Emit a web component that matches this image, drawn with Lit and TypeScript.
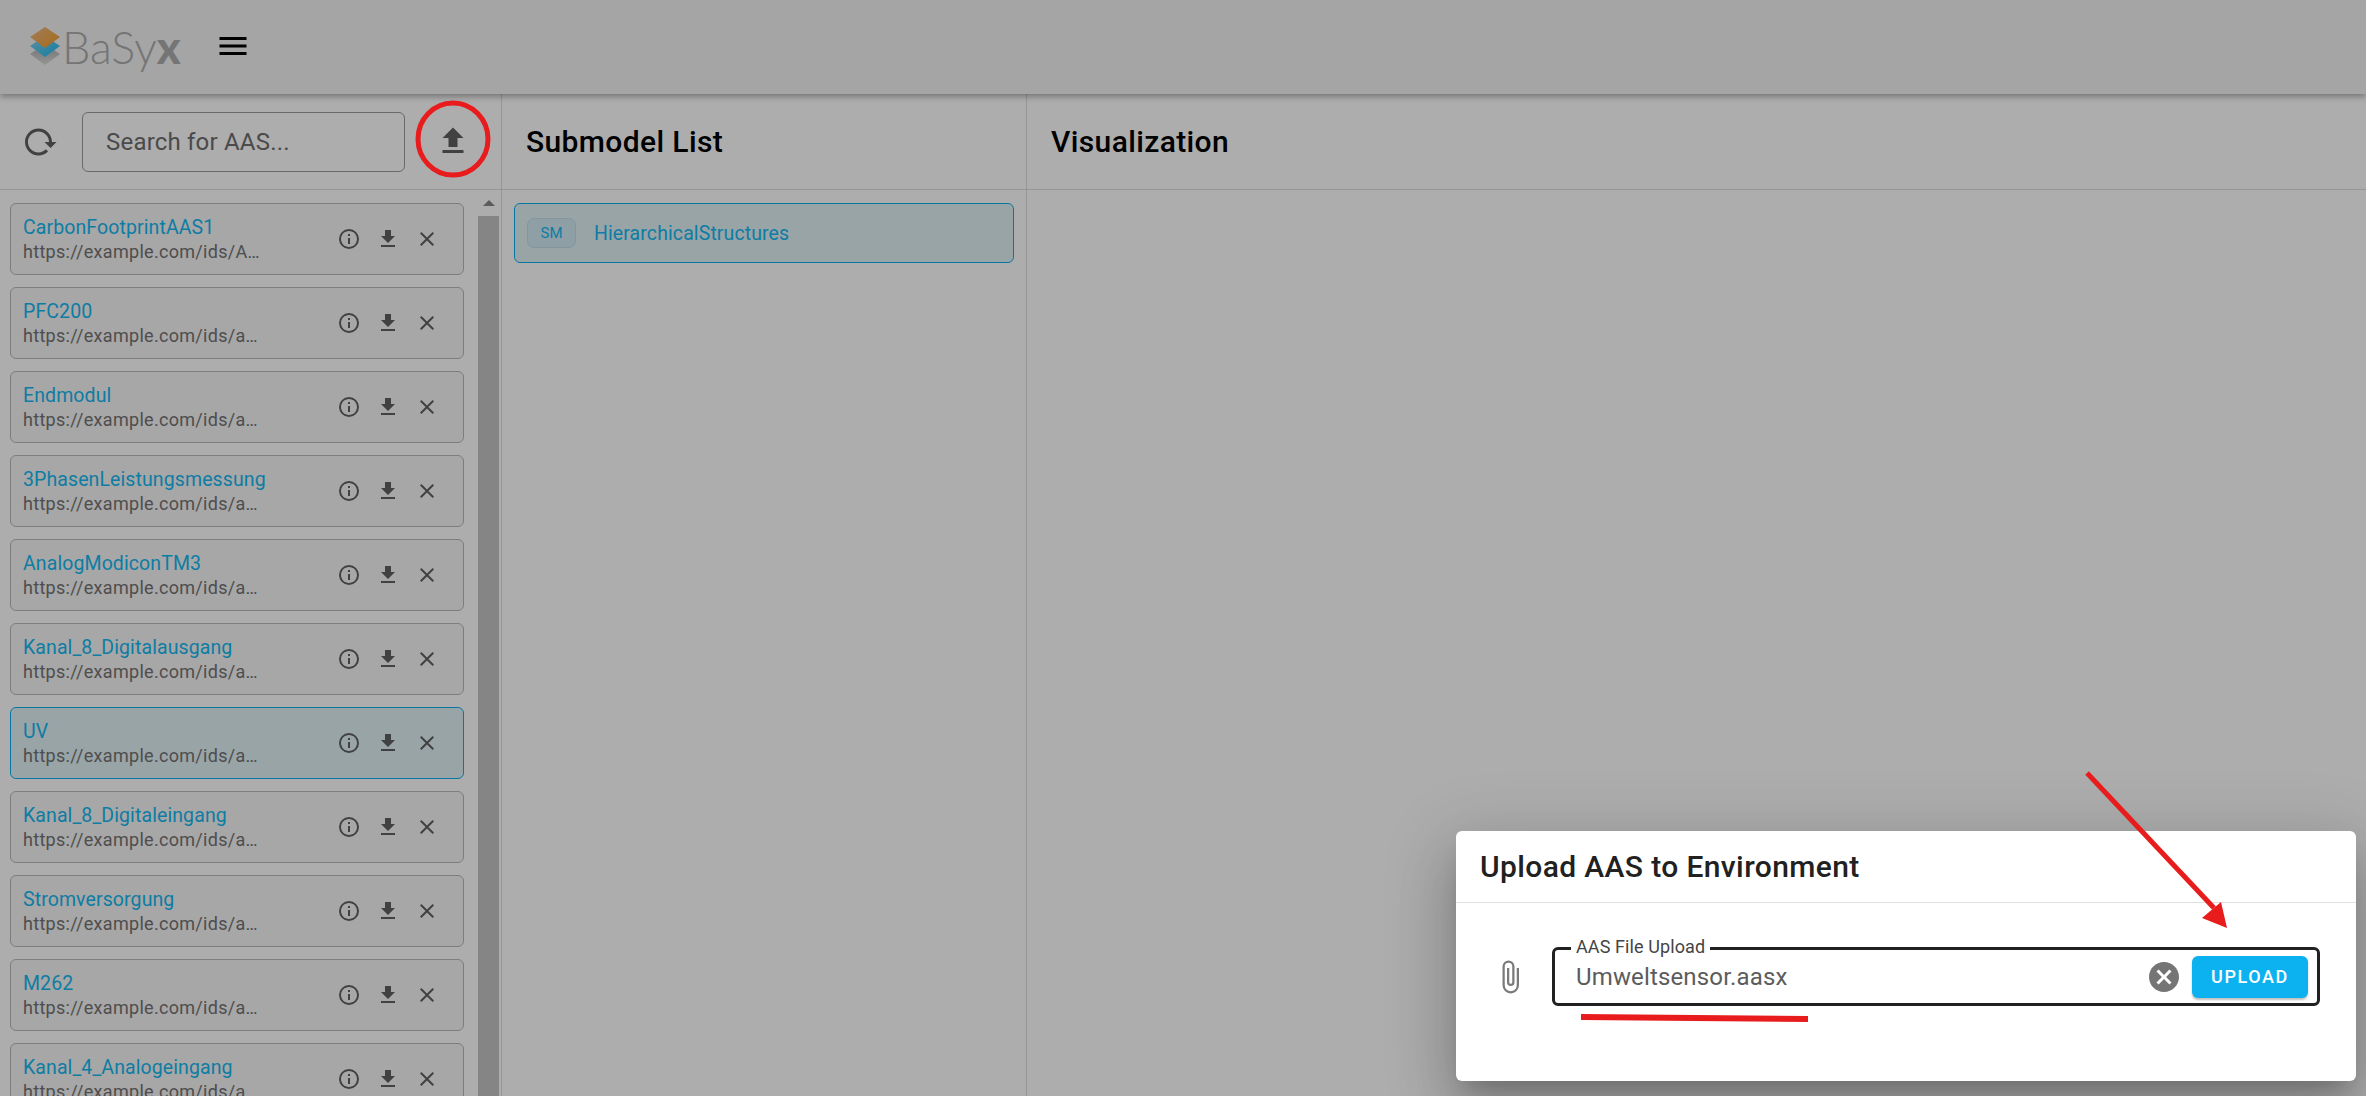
import { LitElement, html, css, svg } from 'lit'
import { customElement } from 'lit/decorators.js'

const mdi = {
  menu: 'M3,6H21V8H3V6M3,11H21V13H3V11M3,16H21V18H3V16Z',
  reload: 'M2 12C2 16.97 6.03 21 11 21C13.39 21 15.68 20.06 17.4 18.4L15.9 16.9C14.63 18.25 12.86 19 11 19C4.76 19 1.64 11.46 6.05 7.05C10.46 2.64 18 5.77 18 12H15L19 16H19.1L23 12H20C20 7.03 15.97 3 11 3C6.03 3 2 7.03 2 12Z',
  upload: 'M9,16V10H5L12,3L19,10H15V16H9M5,20V18H19V20H5Z',
  download: 'M5,20H19V18H5M19,9H15V3H9V9H5L12,16L19,9Z',
  close: 'M19,6.41L17.59,5L12,10.59L6.41,5L5,6.41L10.59,12L5,17.59L6.41,19L12,13.41L17.59,19L19,17.59L13.41,12L19,6.41Z',
  info: 'M11,9H13V7H11M12,20C7.59,20 4,16.41 4,12C4,7.59 7.59,4 12,4C16.41,4 20,7.59 20,12C20,16.41 16.41,20 12,20M12,2A10,10 0 0,0 2,12A10,10 0 0,0 12,22A10,10 0 0,0 22,12A10,10 0 0,0 12,2M11,17H13V11H11V17Z',
  clip: 'M16.5,6V17.5A4,4 0 0,1 12.5,21.5A4,4 0 0,1 8.5,17.5V5A2.5,2.5 0 0,1 11,2.5A2.5,2.5 0 0,1 13.5,5V15.5A1,1 0 0,1 12.5,16.5A1,1 0 0,1 11.5,15.5V6H10V15.5A2.5,2.5 0 0,0 12.5,18A2.5,2.5 0 0,0 15,15.5V5A4,4 0 0,0 11,1A4,4 0 0,0 7,5V17.5A5.5,5.5 0 0,0 12.5,23A5.5,5.5 0 0,0 18,17.5V6H16.5Z',
  clear: 'M12,2C17.53,2 22,6.47 22,12C22,17.53 17.53,22 12,22C6.47,22 2,17.53 2,12C2,6.47 6.47,2 12,2M15.59,7L12,10.59L8.41,7L7,8.41L10.59,12L7,15.59L8.41,17L12,13.41L15.59,17L17,15.59L13.41,12L17,8.41L15.59,7Z',
}

const icon = (d: string, size: number) => html`<svg class="icon" width=${size} height=${size} viewBox="0 0 24 24"><path d=${d} fill="currentColor"></path></svg>`

const aasList = [
  { name: 'CarbonFootprintAAS1', id: 'https://example.com/ids/A…' },
  { name: 'PFC200', id: 'https://example.com/ids/a…' },
  { name: 'Endmodul', id: 'https://example.com/ids/a…' },
  { name: '3PhasenLeistungsmessung', id: 'https://example.com/ids/a…' },
  { name: 'AnalogModiconTM3', id: 'https://example.com/ids/a…' },
  { name: 'Kanal_8_Digitalausgang', id: 'https://example.com/ids/a…' },
  { name: 'UV', id: 'https://example.com/ids/a…', selected: true },
  { name: 'Kanal_8_Digitaleingang', id: 'https://example.com/ids/a…' },
  { name: 'Stromversorgung', id: 'https://example.com/ids/a…' },
  { name: 'M262', id: 'https://example.com/ids/a…' },
  { name: 'Kanal_4_Analogeingang', id: 'https://example.com/ids/a…' },
]

@customElement('app-root')
export class AppRoot extends LitElement {
  static styles = css`
    :host {
      display: block;
      position: relative;
      height: 1096px;
      overflow: hidden;
      background: #fff;
      font-family: Roboto, sans-serif;
      color: #000;
    }

    .icon {
      display: block;
      flex: none;
    }

    /* header */
    .header {
      position: relative;
      z-index: 1;
      height: 94px;
      display: flex;
      align-items: center;
      background: #f3f3f3;
      box-shadow: 0 3px 6px rgba(0, 0, 0, 0.3);
    }

    .logo {
      display: flex;
      align-items: center;
      margin-left: 30px;
      margin-top: -3px;
      width: 185px;
    }

    .logo-text {
      font-family: Lato, sans-serif;
      font-weight: 300;
      font-size: 45px;
      line-height: 1;
      color: #adadad;
      margin-left: 2px;
      margin-top: 3px;
    }

    .logo-text b {
      font-weight: 900;
      color: #adadad;
    }

    .menu {
      color: #000;
      margin-top: -2px;
    }

    /* columns */
    .columns {
      display: flex;
      height: 1002px;
    }

    .col-aas {
      width: 501px;
      flex: none;
      border-right: 1px solid #ddd;
      display: flex;
      flex-direction: column;
    }

    .col-sm {
      width: 524px;
      flex: none;
      border-right: 1px solid #ddd;
      display: flex;
      flex-direction: column;
    }

    .col-vis {
      flex: 1;
    }

    .toolbar {
      height: 96px;
      flex: none;
      box-sizing: border-box;
      border-bottom: 1px solid #ddd;
      display: flex;
      align-items: center;
    }

    .toolbar h2 {
      margin: 0 0 0 24px;
      font-size: 30px;
      font-weight: 500;
      letter-spacing: 0.375px;
    }

    .col-aas .toolbar {
      padding-left: 22px;
    }

    .reload {
      color: #616161;
    }

    .search {
      width: 323px;
      height: 60px;
      box-sizing: border-box;
      margin-left: 24px;
      margin-top: 1px;
      padding-left: 23px;
      display: flex;
      align-items: center;
      border: 1.5px solid #9c9c9c;
      border-radius: 6px;
      font-size: 24px;
      letter-spacing: 0.2px;
      color: #6e6e6e;
    }

    .upload-btn {
      margin-left: 30px;
      margin-top: -2px;
      color: #616161;
    }

    .list-wrap {
      flex: 1;
      display: flex;
      min-height: 0;
    }

    .list {
      flex: 1;
      padding: 13px 0 0 10px;
      display: flex;
      flex-direction: column;
      gap: 12px;
      overflow: hidden;
    }

    .card {
      width: 454px;
      height: 72px;
      flex: none;
      box-sizing: border-box;
      border: 1.5px solid #b8b8b8;
      border-radius: 6px;
      background: #f6f6f6;
      display: flex;
      align-items: center;
      padding-left: 12px;
    }

    .card.selected {
      border-color: #0cb2f0;
      background: #e2f2f7;
    }

    .card-text {
      width: 314px;
      flex: none;
    }

    .card-name {
      font-size: 19.5px;
      line-height: 24px;
      letter-spacing: 0.1px;
      color: #14b8f2;
    }

    .card-id {
      font-size: 18px;
      line-height: 23px;
      letter-spacing: 0.3px;
      color: #737373;
    }

    .card-actions {
      display: flex;
      gap: 15px;
      color: #616161;
    }

    .scrollbar {
      width: 21px;
      flex: none;
      margin-right: 2px;
      display: flex;
      flex-direction: column;
      align-items: center;
    }

    .scroll-arrow {
      width: 0;
      height: 0;
      margin-top: 10px;
      border-left: 6px solid transparent;
      border-right: 6px solid transparent;
      border-bottom: 6px solid #888;
    }

    .scroll-thumb {
      width: 100%;
      flex: 1;
      margin-top: 10px;
      background: #c4c4c4;
    }

    .sm-list {
      padding: 13px 0 0 12px;
    }

    .sm-card {
      width: 500px;
      height: 60px;
      box-sizing: border-box;
      border: 1.5px solid #0cb2f0;
      border-radius: 6px;
      background: #e2f2f7;
      display: flex;
      align-items: center;
      padding-left: 12px;
    }

    .chip {
      width: 49px;
      height: 30px;
      box-sizing: border-box;
      border: 1px solid #c6dce6;
      border-radius: 7px;
      background: #d2eaf5;
      display: flex;
      align-items: center;
      justify-content: center;
      font-size: 15px;
      color: #14b8f2;
    }

    .sm-name {
      margin-left: 18px;
      font-size: 19.5px;
      letter-spacing: 0.1px;
      color: #14b8f2;
    }

    /* overlay */
    .scrim {
      position: absolute;
      inset: 0;
      z-index: 2;
      background: rgba(0, 0, 0, 0.32);
    }

    .dialog {
      position: absolute;
      z-index: 3;
      left: 1456px;
      top: 831px;
      width: 900px;
      height: 250px;
      background: #fff;
      border-radius: 6px;
      box-shadow: 0 16px 22px -10px rgba(0, 0, 0, 0.2), 0 36px 57px 5px rgba(0, 0, 0, 0.14), 0 14px 69px 12px rgba(0, 0, 0, 0.12);
    }

    .dialog-title {
      height: 72px;
      box-sizing: border-box;
      border-bottom: 1px solid #e0e0e0;
      padding-left: 24px;
      display: flex;
      align-items: center;
      font-size: 30px;
      font-weight: 500;
      letter-spacing: 0.375px;
      color: #212121;
    }

    .dialog-body {
      display: flex;
      align-items: center;
      padding-top: 44px;
    }

    .clip {
      margin-left: 36px;
      color: #7a7a7a;
    }

    .field {
      position: relative;
      width: 768px;
      height: 59px;
      margin-left: 24px;
      box-sizing: border-box;
      border: 3px solid #212121;
      border-radius: 6px;
      display: flex;
      align-items: center;
      padding-left: 21px;
    }

    .field-label {
      position: absolute;
      left: 16px;
      top: -13px;
      padding: 0 5px;
      background: #fff;
      font-size: 18px;
      line-height: 20px;
      letter-spacing: 0.1px;
      color: #444;
    }

    .field-value {
      flex: 1;
      font-size: 24px;
      letter-spacing: 0.15px;
      color: #5c5c5c;
    }

    .clear {
      color: #757575;
      margin-right: 2px;
    }

    .btn {
      width: 116px;
      height: 42px;
      margin-left: 8px;
      margin-right: 9px;
      border-radius: 6px;
      background: #0cb2f0;
      box-shadow: 0 2px 2px rgba(0, 0, 0, 0.25);
      display: flex;
      align-items: center;
      justify-content: center;
      font-size: 18px;
      font-weight: 500;
      letter-spacing: 1.6px;
      color: #fff;
    }

    /* hand drawn marks from the screenshot */
    .marks {
      position: absolute;
      inset: 0;
      z-index: 4;
      pointer-events: none;
    }
  `

  private renderCard(item: { name: string; id: string; selected?: boolean }) {
    return html`
      <div class="card ${item.selected ? 'selected' : ''}">
        <div class="card-text">
          <div class="card-name">${item.name}</div>
          <div class="card-id">${item.id}</div>
        </div>
        <div class="card-actions">
          ${icon(mdi.info, 24)} ${icon(mdi.download, 24)} ${icon(mdi.close, 24)}
        </div>
      </div>
    `
  }

  render() {
    return html`
      <div class="header">
        <div class="logo">
          <svg width="30" height="38" viewBox="0 0 30 38">
            <defs>
              <linearGradient id="orange" x1="0" y1="0" x2="1" y2="1">
                <stop offset="0" stop-color="#e8b88a"></stop>
                <stop offset="1" stop-color="#fa9f20"></stop>
              </linearGradient>
              <linearGradient id="blue" x1="0" y1="0" x2="1" y2="1">
                <stop offset="0" stop-color="#8fd0e8"></stop>
                <stop offset="1" stop-color="#16bdf5"></stop>
              </linearGradient>
              <linearGradient id="grey" x1="0" y1="0" x2="0" y2="1">
                <stop offset="0" stop-color="#a8a8a8"></stop>
                <stop offset="1" stop-color="#dcdcdc"></stop>
              </linearGradient>
            </defs>
            ${svg`
              <path d="M15 17 L30 27 L15 38 L0 27 Z" fill="url(#grey)"></path>
              <path d="M15 9 L30 19 L15 30 L0 19 Z" fill="url(#blue)"></path>
              <path d="M15 0 L30 10 L15 21 L0 10 Z" fill="url(#orange)"></path>
            `}
          </svg>
          <div class="logo-text">BaSy<b>x</b></div>
        </div>
        <div class="menu">${icon(mdi.menu, 36)}</div>
      </div>

      <div class="columns">
        <div class="col-aas">
          <div class="toolbar">
            <div class="reload">${icon(mdi.reload, 36)}</div>
            <div class="search">Search for AAS...</div>
            <div class="upload-btn">${icon(mdi.upload, 36)}</div>
          </div>
          <div class="list-wrap">
            <div class="list">${aasList.map((item) => this.renderCard(item))}</div>
            <div class="scrollbar">
              <div class="scroll-arrow"></div>
              <div class="scroll-thumb"></div>
            </div>
          </div>
        </div>

        <div class="col-sm">
          <div class="toolbar"><h2>Submodel List</h2></div>
          <div class="sm-list">
            <div class="sm-card">
              <div class="chip">SM</div>
              <div class="sm-name">HierarchicalStructures</div>
            </div>
          </div>
        </div>

        <div class="col-vis">
          <div class="toolbar"><h2>Visualization</h2></div>
        </div>
      </div>

      <div class="scrim"></div>

      <div class="dialog">
        <div class="dialog-title">Upload AAS to Environment</div>
        <div class="dialog-body">
          <div class="clip">${icon(mdi.clip, 36)}</div>
          <div class="field">
            <div class="field-label">AAS File Upload</div>
            <div class="field-value">Umweltsensor.aasx</div>
            <div class="clear">${icon(mdi.clear, 36)}</div>
            <div class="btn">UPLOAD</div>
          </div>
        </div>
      </div>

      <svg class="marks" width="2366" height="1096" viewBox="0 0 2366 1096">
        <ellipse cx="453" cy="139" rx="35" ry="36" fill="none" stroke="#e81c1c" stroke-width="5"></ellipse>
        <path d="M2087 773 L2214 908" fill="none" stroke="#e81c1c" stroke-width="5"></path>
        <path d="M2221 902 L2227 928 L2202 918 Z" fill="#e81c1c"></path>
        <path d="M1581 1017 L1808 1019" fill="none" stroke="#e81c1c" stroke-width="6"></path>
      </svg>
    `
  }
}

declare global {
  interface HTMLElementTagNameMap {
    'app-root': AppRoot
  }
}
